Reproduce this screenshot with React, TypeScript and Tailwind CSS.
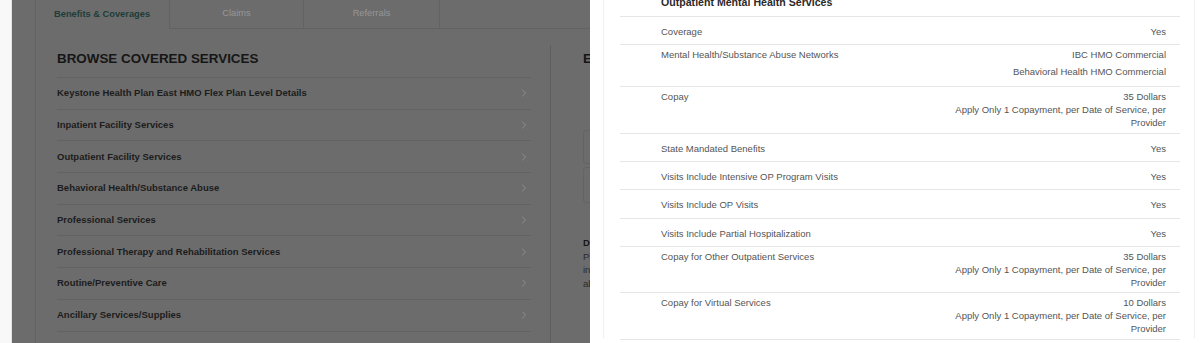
import { ChevronRight } from "lucide-react";

const services = [
  "Keystone Health Plan East HMO Flex Plan Level Details",
  "Inpatient Facility Services",
  "Outpatient Facility Services",
  "Behavioral Health/Substance Abuse",
  "Professional Services",
  "Professional Therapy and Rehabilitation Services",
  "Routine/Preventive Care",
  "Ancillary Services/Supplies",
  "Other Covered Services and Items",
];

type Detail = { label: string; values: string[]; kind: "single" | "list" | "multi" };

const details: Detail[] = [
  { label: "Coverage", values: ["Yes"], kind: "single" },
  {
    label: "Mental Health/Substance Abuse Networks",
    values: ["IBC HMO Commercial", "Behavioral Health HMO Commercial"],
    kind: "list",
  },
  {
    label: "Copay",
    values: ["35 Dollars", "Apply Only 1 Copayment, per Date of Service, per Provider"],
    kind: "multi",
  },
  { label: "State Mandated Benefits", values: ["Yes"], kind: "single" },
  { label: "Visits Include Intensive OP Program Visits", values: ["Yes"], kind: "single" },
  { label: "Visits Include OP Visits", values: ["Yes"], kind: "single" },
  { label: "Visits Include Partial Hospitalization", values: ["Yes"], kind: "single" },
  {
    label: "Copay for Other Outpatient Services",
    values: ["35 Dollars", "Apply Only 1 Copayment, per Date of Service, per Provider"],
    kind: "multi",
  },
  {
    label: "Copay for Virtual Services",
    values: ["10 Dollars", "Apply Only 1 Copayment, per Date of Service, per Provider"],
    kind: "multi",
  },
];

function DetailRow({ row }: { row: Detail }) {
  const pad =
    row.kind === "single"
      ? "pt-[8px] pb-[6.3px] leading-[13px]"
      : row.kind === "list"
        ? "pt-[0.5px] pb-[6.5px] leading-[17px]"
        : "pt-[3px] pb-[3.5px] leading-[13px]";
  return (
    <div className={`flex justify-between border-t border-[#e6e6e6] ${pad}`}>
      <span className="pl-[41px]">{row.label}</span>
      <div className="w-[230px] pr-[14px] text-right">
        {row.values.map((v) => (
          <div key={v}>{v}</div>
        ))}
      </div>
    </div>
  );
}

export default function App() {
  return (
    <div className="flex h-[343px] w-[1202px] overflow-hidden font-['Liberation_Sans',Arial,sans-serif]">
      {/* page edge */}
      <div className="w-[12px] shrink-0 border-r border-[#e4e4e4] bg-[#f8f8f8]" />

      {/* dimmed page behind the drawer */}
      <div className="w-[578px] shrink-0 overflow-hidden bg-[#6c6c6c] pl-[23px]">
        <div className="h-full w-[760px] border-l border-[#626262]">
          <div className="flex h-[29px] text-[9.3px]">
            <div className="flex w-[133px] shrink-0 items-center pl-[18px] font-bold text-[#1d3d39]">
              Benefits &amp; Coverages
            </div>
            <div className="flex w-[135px] shrink-0 items-center justify-center border-x border-b border-[#626262] text-[#979797]">
              Claims
            </div>
            <div className="flex w-[136px] shrink-0 items-center justify-center border-r border-b border-[#626262] text-[#979797]">
              Referrals
            </div>
            <div className="flex-1 border-b border-[#626262]" />
          </div>

          <div className="mt-[16px] flex pl-[21px]">
            <div className="w-[494px] shrink-0 border-r border-[#5f5f5f] pt-[6px] pr-[19px]">
              <h2 className="mb-[10px] text-[13.4px] leading-[16px] font-bold text-[#161616]">
                BROWSE COVERED SERVICES
              </h2>
              {services.map((s) => (
                <div
                  key={s}
                  className="flex h-[31.7px] items-center justify-between border-t border-[#636363] pr-[1px] text-[9.5px] font-bold text-[#1c1c1c]"
                >
                  <span>{s}</span>
                  <ChevronRight size={12} strokeWidth={1.4} className="text-[#9c9c9c]" />
                </div>
              ))}
            </div>

            <div className="shrink-0 pt-[6px] pl-[32px]">
              <h2 className="text-[13.4px] leading-[16px] font-bold text-[#161616]">ELIGIBILITY</h2>
              <div className="mt-[63px] h-[34px] w-[200px] rounded-[3px] border border-[#646464]" />
              <div className="mt-[3px] h-[36px] w-[200px] rounded-[3px] border border-[#646464]" />
              <div className="mt-[33px] text-[9.5px] leading-[13.7px] text-[#2a2a2a]">
                <div className="font-bold text-[#161616]">Dental</div>
                <div>Plan details</div>
                <div>information</div>
                <div>about</div>
              </div>
            </div>
          </div>
        </div>
      </div>

      {/* drawer */}
      <div className="w-[612px] shrink-0 bg-white pr-[7px] pl-[13px]">
        <div className="h-full border-x border-[#f0f0f0] pr-[14px] pl-[16px] text-[9.5px] text-[#555]">
          <div className="mt-[-5px] pb-[7px] pl-[41px] text-[10.6px] leading-[14px] font-bold text-[#2a2a2a]">
            Outpatient Mental Health Services
          </div>
          {details.map((r) => (
            <DetailRow key={r.label} row={r} />
          ))}
          <div className="border-t border-[#e6e6e6]" />
        </div>
      </div>
    </div>
  );
}
